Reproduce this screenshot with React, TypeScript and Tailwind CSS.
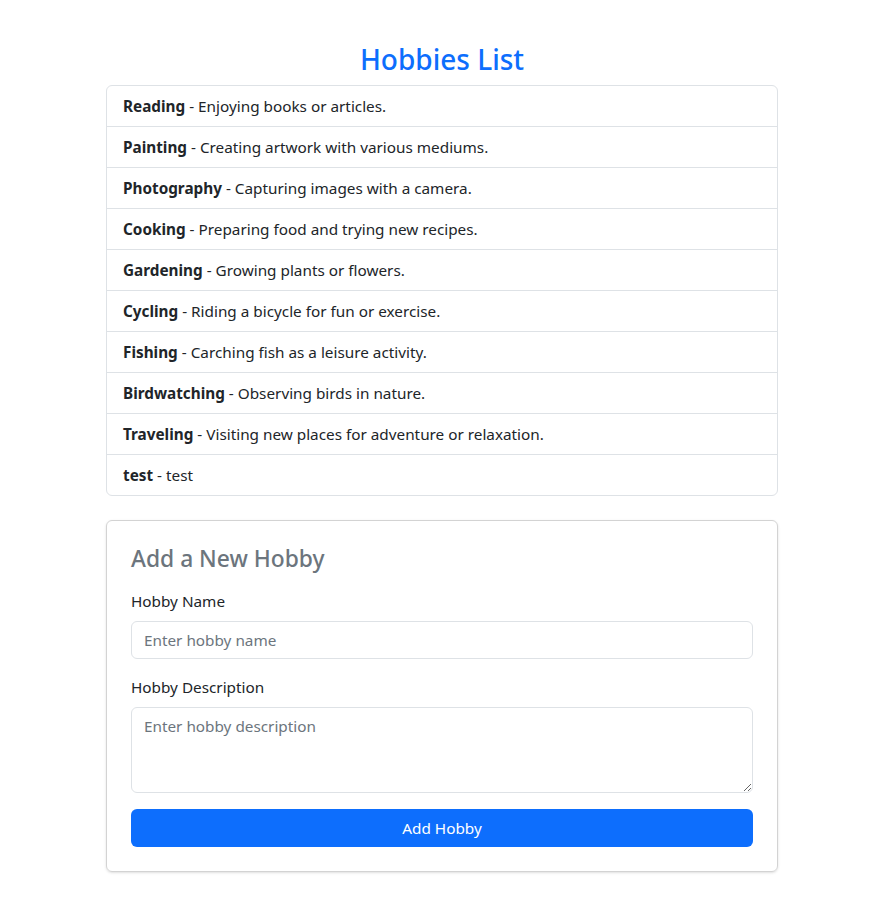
import React from "react";

const hobbies = [
  ["Reading", "Enjoying books or articles."],
  ["Painting", "Creating artwork with various mediums."],
  ["Photography", "Capturing images with a camera."],
  ["Cooking", "Preparing food and trying new recipes."],
  ["Gardening", "Growing plants or flowers."],
  ["Cycling", "Riding a bicycle for fun or exercise."],
  ["Fishing", "Carching fish as a leisure activity."],
  ["Birdwatching", "Observing birds in nature."],
  ["Traveling", "Visiting new places for adventure or relaxation."],
  ["test", "test"],
];

export default function App() {
  return (
    <div
      className="min-h-[909px] bg-white text-[#212529] text-[15.3px] leading-[24px]"
      style={{ fontFamily: '"Noto Sans", "Open Sans", sans-serif' }}
    >
      <div className="ml-[106px] w-[672px] pt-[42px]">
        <h2 className="text-center text-[28px] leading-[35px] font-medium text-[#0d6efd] mb-[8px]">
          Hobbies List
        </h2>
        <ul className="border border-[#dee2e6] rounded-[6px]">
          {hobbies.map(([n, d], i) => (
            <li
              key={i}
              className={`px-[16px] py-[8px] ${i > 0 ? "border-t border-[#dee2e6]" : ""}`}
            >
              <strong className="font-bold">{n}</strong> - {d}
            </li>
          ))}
        </ul>
        <div className="mt-[24px] border border-[#d3d3d3] rounded-[6px] shadow-sm p-[24px]">
          <h4 className="text-[22.8px] leading-[28px] font-medium text-[#6c757d] mb-[16px]">
            Add a New Hobby
          </h4>
          <label className="block mb-[8px]">Hobby Name</label>
          <input
            className="block w-full h-[38px] border border-[#dee2e6] rounded-[6px] px-[12px] placeholder:text-[#6c757d] mb-[16px] outline-none"
            placeholder="Enter hobby name"
          />
          <label className="block mb-[8px]">Hobby Description</label>
          <textarea
            rows={3}
            className="block w-full h-[86px] border border-[#dee2e6] rounded-[6px] px-[12px] py-[6px] placeholder:text-[#6c757d] mb-[16px] outline-none"
            placeholder="Enter hobby description"
          />
          <button className="block w-full h-[38px] bg-[#0d6efd] text-white rounded-[6px]">
            Add Hobby
          </button>
        </div>
      </div>
    </div>
  );
}
